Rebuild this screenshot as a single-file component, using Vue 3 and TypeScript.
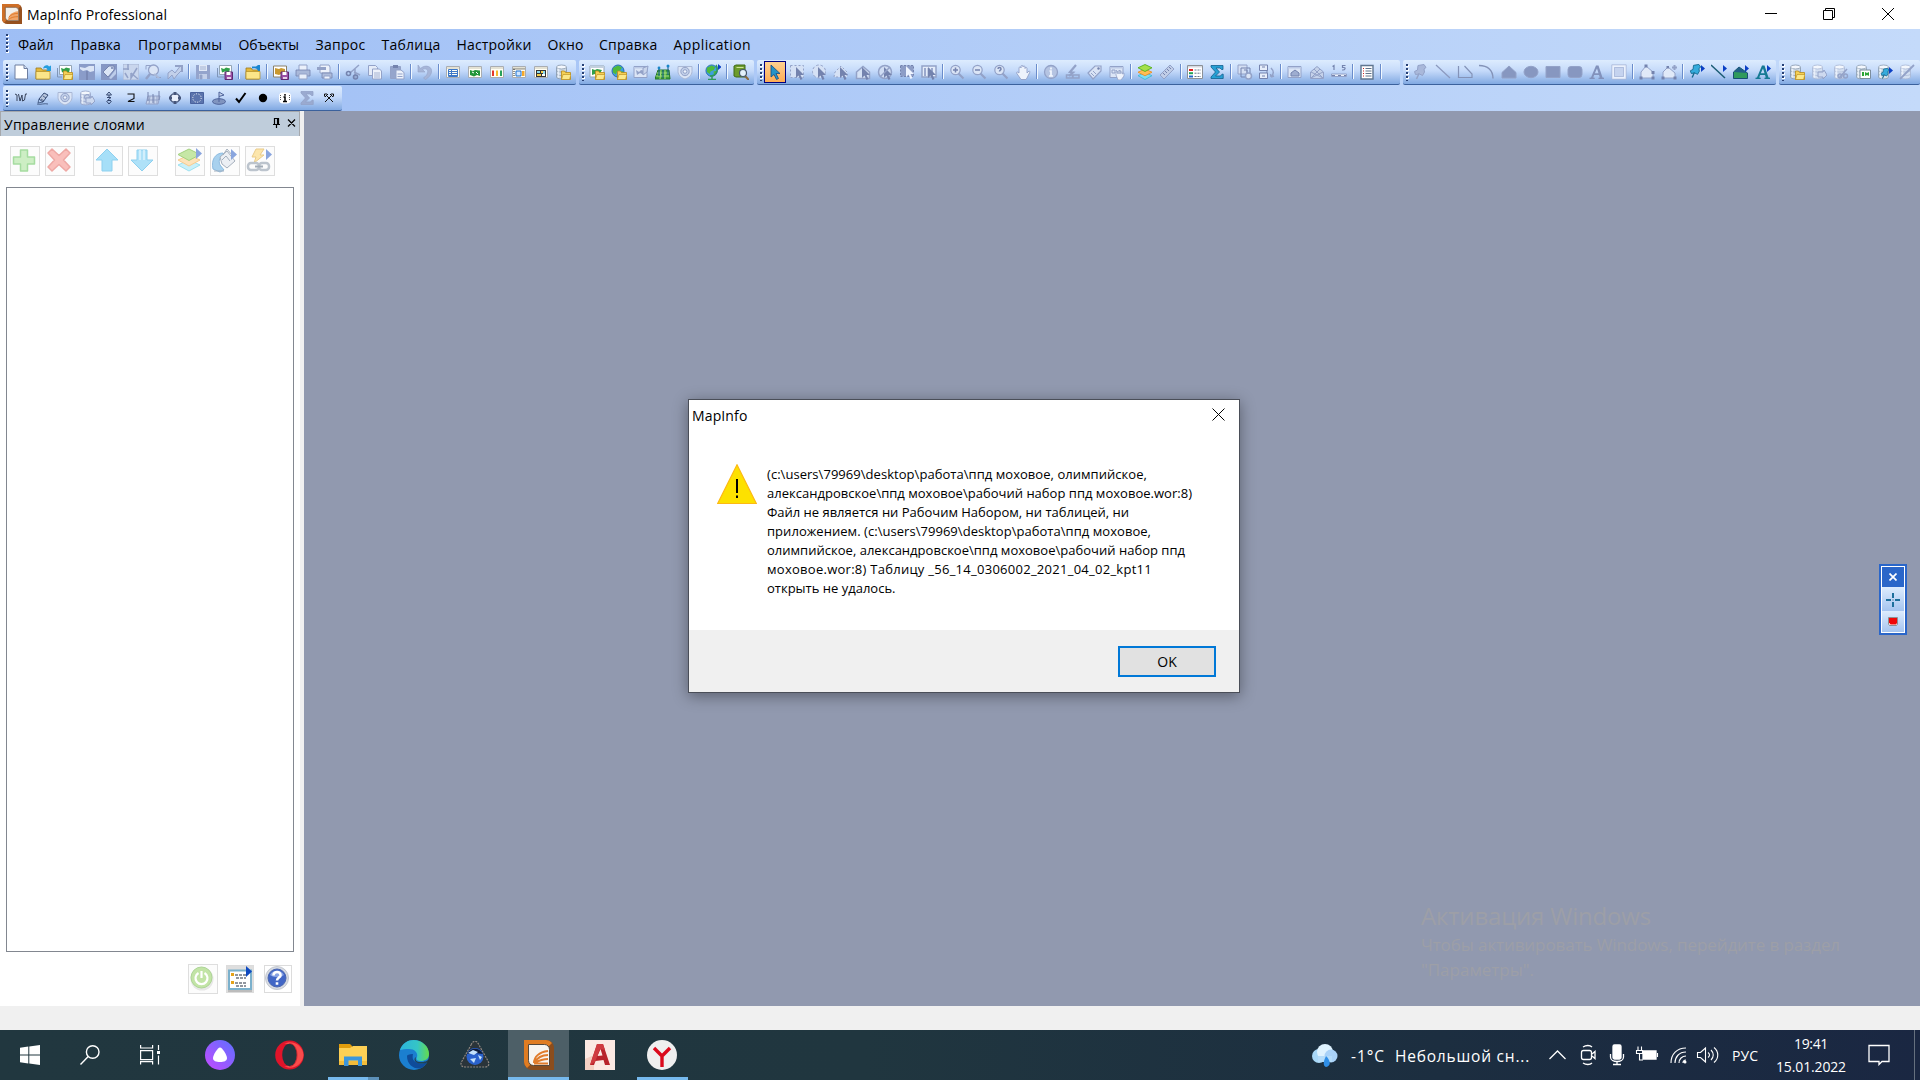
<script setup lang="ts">
interface FitBinding { value: number }
// Tracks a label so that it occupies the width given in pixels.
const vFit = {
  mounted(el: HTMLElement, { value }: FitBinding) {
    const n = (el.textContent || '').length
    const w = el.getBoundingClientRect().width
    if (n > 0 && w > 0) el.style.letterSpacing = (value - w) / n + 'px'
  },
}

const G = '#93a2c8'
const D = '#7483ae'
const L = '#dbe5f6'
const tri = '<path d="M12 1v7l4-3.500z" fill="#0a3fc4"/>'
const folder = '<path d="M6.500 7h3l1 1.500h5v7h-9z" fill="#f5d055" stroke="#b88a1a" stroke-width=".8"/><path d="M8 10.500h8l-1.500 5h-8z" fill="#fbe88a" stroke="#b88a1a" stroke-width=".6"/>'
const bigFolder = '<path d="M1 4h5l1.500 2H14v9H1z" fill="#e4b93c" stroke="#9c7a1c" stroke-width=".8"/><path d="M1 7.500h14v7.500H1z" fill="#fbe589" stroke="#b08a24" stroke-width=".7"/>'
const disk = '<path d="M8 8h7.500v7.500H8z" fill="#9b4fa5" stroke="#5c2a70"/><path d="M9.500 8h4v3h-4z" fill="#fff"/><path d="M10 13h4v2h-4z" fill="#e5cfe8"/>'
const smallMap = '<path d="M2.500 1.500h12v9h-12z" fill="#fff" stroke="#93a5b5"/><path d="M4 4l3 1 2-1.500 4 1-1 4-4-1-3 1z" fill="#2fa04a"/>'
const gFrame = `<path d="M1 2.500h13v11H1z" fill="${L}" stroke="${G}"/><path d="M1 3h13v1.500H1z" fill="#bccae6"/>`
const win = '<path d="M1.500 2.500h13v11h-13z" fill="#fffef4" stroke="#a9adb2"/><path d="M2 3h12v2H2z" fill="#e4e2d4"/>'
const arrow = (c: string, x = 0, y = 0) => `<path transform="translate(${x} ${y})" d="M5 2v11l2.500-2.500L9.500 15l2-1-2-4h3.500z" fill="${c}"/>`
const gArrow = arrow(D, 2, 1)
const cyl = (a: string, b: string) => `<path d="M1.500 3v10c0 2.500 10 2.500 10 0V3" fill="${a}" stroke="${b}" stroke-width=".8"/><ellipse cx="6.500" cy="3" rx="5" ry="2" fill="#f3f7fd" stroke="${b}" stroke-width=".8"/><path d="M1.500 6.500c0 2 10 2 10 0M1.500 10c0 2 10 2 10 0" fill="none" stroke="${b}" stroke-width=".7"/><path d="M3.500 4.500v9" stroke="#f4f8ff" stroke-width="1.500" opacity=".7"/>`
const lens = (t: string) => `<path d="M9.500 9.500l5 5" stroke="${G}" stroke-width="2.200"/><circle cx="6.500" cy="6" r="4.700" fill="${L}" stroke="${G}" stroke-width="1.200"/><path d="${t}" stroke="${D}" stroke-width="1.500" fill="none"/>`
const house = 'M1.500 14.500V8l6.500-5.500L14.500 8v6.500z'
const pin = (a: string, b: string) => `<path d="M5 1.500l6-1 2 3-2 1.500.500 3-2 3.500-3-1.500-4 .500-1-3 3-1.500z" fill="${a}" stroke="${b}"/><path d="M6 9.500L3.500 15" stroke="${b}" stroke-width="1.500"/>`
const layers = '<path d="M8 8.500l7 3.200-7 3.800-7-3.800z" fill="#7fdcf2" stroke="#3bb5d6" stroke-width=".8"/><path d="M8 5l7 3.200-7 3.600-7-3.600z" fill="#ffbd55" stroke="#ea8a1c" stroke-width=".8"/><path d="M8 .500l7 3.300-7 3.700-7-3.700z" fill="#a4e04a" stroke="#4ea912" stroke-width=".8"/>'
const globe = '<circle cx="7" cy="7" r="6" fill="#3e9fe0" stroke="#2a6cae"/><path d="M2 4l5-2.500 4 2-2 3-3 1-1 3-3-2zM9 8l3-1-.500 3-2 2z" fill="#4fba3c"/>'
const badge = `<path d="M1 2.500h14v5c0 4-4 6.500-7 7.500-3-1-7-3.500-7-7.500z" fill="${L}" stroke="#aab8d6"/><circle cx="8" cy="7.500" r="4.200" fill="#c0cee8" stroke="${G}"/><circle cx="8" cy="7.500" r="1.800" fill="#eef4fd" stroke="${G}"/>`
const sigma = (a: string, b: string) => `<path d="M2 1.500h12v4h-1.500L11 4H7l3.500 4L6.500 12h5l1.500-1.800h1.200v4.300H2V13l4.500-5L2 3z" fill="${a}" stroke="${b}" stroke-width=".8"/>`
const aLetterShape = (a: string) => `<path d="M.500 15v-1.200l1.500-.300L7 1.500h2.500l4 12 1.500.300V15H9.500v-1.200l1.300-.300-.800-2.500H5.200l-1 2.500 1.500.300V15zM5.800 9.300h3.700L8 4.500z" fill="${a}"/>`
const gears = `<path d="M7 8h5l1-2 3 5-4 4v-2H7z" fill="#cdd9ef" stroke="${G}"/>`

const icons: Record<string, string> = {
  new: '<path d="M2 1h9l3.500 3.500V15H2z" fill="#fff" stroke="#6e7fa0"/><path d="M11 1v3.500h3.500" fill="#d6e2f4" stroke="#6e7fa0"/>',
  open: bigFolder + '<path d="M8 4.500c1-4 5-4 6-2l2-1V7h-5l1.500-1.500C12 4 10.500 3.500 8 4.500z" fill="#259ede"/>',
  openwor: smallMap + '<path d="M.500 4v9H5" fill="none" stroke="#7f96b8"/>' + folder,
  g1: `<path d="M0 0h16v16H0z" fill="#8a9cc9"/><path d="M1 3l5 1 4-2h5v5l-4 1-3-2-4 1-3-2z" fill="${L}"/><path d="M8 7v9" stroke="${D}" stroke-width="1.500"/>`,
  g2: `<path d="M0 0h16v16H0z" fill="#8697c4"/><path d="M2 8l6-6h5v4l-6 7z" fill="${L}" stroke="${D}"/><circle cx="11" cy="4" r="1" fill="${D}"/><path d="M8 14l7-9v5l-5 5z" fill="#bccce9"/>`,
  g3: `<path d="M0 0h16v16H0z" fill="#c9d6ed" stroke="#a5b4d3"/><path d="M0 5h6M5 0v6M8 9l7 6M8 9v5l6-10M2 9l3 5" stroke="${G}" fill="none" stroke-width="1.500"/>`,
  g4: `<path d="M5 10l-4 5" stroke="${G}" stroke-width="2.500"/><path d="M1 1.500h5M1 1.500v4M11 13.500h5" stroke="${G}"/><circle cx="8.500" cy="6" r="5" fill="${L}" stroke="${G}" stroke-width="1.300"/><path d="M9 10l5 4" stroke="#aab9d8" stroke-width="2"/>`,
  g5: `<path d="M1 9l4-3 3 3 6-8 1 5-5 5-3 4-2-4-4 4z" fill="#c2d0ea" stroke="${G}"/><path d="M8 2h7v6" fill="none" stroke="${G}" stroke-width="2"/>`,
  save: `<path d="M1 1h14v14H1z" fill="#94a4cc"/><path d="M4 1h8v6H4z" fill="#e1e9f7"/><path d="M4 10h8v5H4z" fill="#c3cfe8"/><path d="M5 11h2v4H5zM5 3h6M5 5h6" stroke="${G}" fill="${G}" stroke-width=".8"/>`,
  savewor: smallMap + '<path d="M.500 4v9H7" fill="none" stroke="#7f96b8"/>' + disk,
  close: bigFolder + '<path d="M7 2.500h4l2-1.500h2v6h-2l-1-2c-1-1-3-1-5-.500z" fill="#1a86d0"/>',
  saveas: '<path d="M.500 2h13v11H.500z" fill="#fff" stroke="#8a8068"/><path d="M2 4l4 1 2-1 4 1v3L6 11l-4-1z" fill="#c9982f"/>' + disk,
  print: `<path d="M4 1h8v6H4z" fill="#eaf0fb" stroke="${G}"/><path d="M1 6h14v6H1z" fill="#a9b8d9" stroke="${D}" stroke-width=".8"/><path d="M4 10h8v5H4z" fill="#e8eefa" stroke="${G}"/>`,
  printpdf: `<path d="M3 1h9l1 2v6H3z" fill="#edf2fb" stroke="${G}"/><path d="M0 3h9v3H0z" fill="${G}"/><path d="M5 9h10v5H5z" fill="#afbddb" stroke="${D}" stroke-width=".8"/><path d="M7 12h6v3H7z" fill="#eef3fc" stroke="${G}"/>`,
  cut: `<path d="M14 1L5 9M9 8l6 3M10 5v9" stroke="${G}" stroke-width="1.500"/><circle cx="3.500" cy="9.500" r="2" fill="none" stroke="${D}" stroke-width="1.600"/><circle cx="10.500" cy="13" r="2" fill="none" stroke="${D}" stroke-width="1.600"/>`,
  copy: `<path d="M1.500 1.500h7l2 2v8h-9z" fill="#e5ecf8" stroke="${G}"/><path d="M5.500 5h7l2 2v8h-9z" fill="#edf2fb" stroke="${G}"/><path d="M7 9h6M7 11h6M7 13h6" stroke="${G}" stroke-width=".8"/>`,
  paste: `<path d="M1.500 2.500h10v12h-10z" fill="#95a5cc" stroke="${G}"/><path d="M4 1h5v3H4z" fill="${D}"/><path d="M7 6h5l3 2.500V15H7z" fill="#edf2fb" stroke="${G}"/><path d="M8.500 10h5M8.500 12.500h5" stroke="${G}"/>`,
  undo: `<path d="M1 1v7h7L5.500 5.500c4-2 6 1 5 3.500-.500 2-2 3.500-4 5l2 1.500c7-4 8-11 3-13-3-1-6 0-8 2z" fill="#a6b5d8" stroke="${G}" stroke-width=".6"/>`,
  browse: win + '<path d="M4 7.500h8M4 9.500h8M4 11.500h8M6.500 6v6" stroke="#3d78c8"/><path d="M3.500 5.500h9v7h-9z" fill="none" stroke="#3d78c8"/>',
  map: win + '<path d="M3 6l3 1 2-1 5 .500V12l-3-1-3 1.500L3 11z" fill="#23963a"/><path d="M5 8l2 1M9 8l2 2" stroke="#fff"/>',
  graph: win + '<path d="M3 6.500h2v5.500H3z" fill="#e4362b"/><path d="M7 6.500h2v5.500H7z" fill="#f5b92b"/><path d="M11 6.500h2v5.500h-2z" fill="#27a05a"/>',
  layout: win + '<path d="M2.500 5h11" stroke="#222" stroke-dasharray="1 1"/><path d="M3 5v8" stroke="#222" stroke-dasharray="1 1"/><path d="M5 7h5v5H5z" fill="#cfe6ff" stroke="#1a6fd0"/><path d="M11 7h2.500v5H11z" fill="#f6a82c"/>',
  redistrict: win + '<path d="M3 6h10v7H3z" fill="#333"/><path d="M4 7h3v2H4zM10 7h2v3h-2z" fill="#8fdcf0"/><path d="M8 7h2v2H8zM4 10h4v2H4z" fill="#f6d04a"/><path d="M9 10h3v2H9z" fill="#fff"/>',
  dbopen: cyl('#cfdbe8', '#8496ab') + folder,
  mapopen: '<path d="M1 2h14v11H1z" fill="#fff" stroke="#93a5b5"/><path d="M1 2h14v2H1z" fill="#c3d0de"/><path d="M3 5l3 1 2-1 5 1-3 5-4-1-3 1z" fill="#2fa04a"/>' + folder,
  globeopen: globe + folder,
  g6: gFrame + `<path d="M3 6l3 2 2-2 4 1-1 4-4-2-3 2z" fill="${G}"/><path d="M10 4l5-2-1 6-4 3z" fill="#c8d4eb" stroke="${G}"/>`,
  geo: '<path d="M3 6h11l1 9H0z" fill="#3fa13a" stroke="#23742a"/><path d="M2 9h12M1 12h13M6 6l-1 9M10 6v9" stroke="#a6dc7c"/><path d="M4 3v9M13 2v9M8 6v8" stroke="#125b8e"/><circle cx="13" cy="2" r="1.500" fill="#1a86c8"/><circle cx="4" cy="4" r="1.400" fill="#1a86c8"/>',
  badge,
  globe2: '<g transform="scale(.95)">' + globe + '</g><path d="M11 1c3 5 0 11-6 11M7 12v3M3 15.500h8" stroke="#2f9a5c" stroke-width="1.500" fill="none"/>' + '<path d="M13 0v6l3.500-3z" fill="#0a3fc4"/>',
  book: '<path d="M1 2l2-1h9v12H3l-2-1z" fill="#6d9c2c" stroke="#3f6a18"/><path d="M3.500 3.500h7" stroke="#cfe39a"/><path d="M12 12l4 4" stroke="#8a6a3c" stroke-width="2.200"/><circle cx="10" cy="9" r="3.500" fill="#e3f1fa" stroke="#44566a" stroke-width="1.200"/>',
  select: '<path d="M4 1v12l3-2.500 2.500 5 2-1-2.500-5h4z" fill="#2493c9" stroke="#174a80" stroke-width=".8"/>',
  marquee: `<path d="M1.500 1.500h13v12h-13z" fill="#d5e1f5" stroke="${G}" stroke-dasharray="2 2"/>` + gArrow,
  radius: `<circle cx="8" cy="7.500" r="6.500" fill="#d5e1f5" stroke="${G}" stroke-dasharray="2.500 2"/>` + gArrow,
  polysel: `<path d="M1 13l1-5 6-6 6 6v5z" fill="#d5e1f5" stroke="${G}" stroke-dasharray="2 2"/>` + gArrow,
  housesel: `<path d="${house}" fill="#d5e1f5" stroke="${G}" stroke-width="1.500"/>` + gArrow,
  unsel: `<circle cx="8" cy="8" r="6.500" fill="#cfdcf3" stroke="${G}" stroke-width="1.500"/>` + gArrow + `<path d="M3 13L13 3" stroke="${G}" stroke-width="1.500"/>`,
  invsel: `<path d="M1.500 1.500h13v11h-13z" fill="#8d9dc6" stroke="${D}" stroke-dasharray="2 1.500"/>` + arrow('#eef4ff', 2, 0),
  graphsel: `<path d="M1 2h14v11H1z" fill="#e4ecfa" stroke="${G}" stroke-width="1.500"/><path d="M4 4v8M7.500 4v8M11 4v8" stroke="${G}" stroke-width="1.800"/>` + gArrow,
  zoomin: lens('M4 6h5M6.500 3.500v5'),
  zoomout: lens('M4 6h5'),
  zoomq: lens('M5 5c0-2 3-2 3 0 0 1.200-1.500 1-1.500 2.500'),
  hand: `<path d="M4 9V4c0-1.500 2-1.500 2 0V2.500c0-1.500 2-1.500 2 0V3c0-1.500 2-1.500 2 0v1.500c0-1.500 2-1.500 2 0V9l2-2c1 0 1 1 .500 2L12 14l-1 1.500H6L1.500 9c0-1 1-1.500 2.500 0z" fill="#eef3fc" stroke="${G}" stroke-width=".9"/>`,
  info: `<circle cx="8" cy="8" r="6.500" fill="#b5c4e2" stroke="${G}" stroke-width="1.300"/><path d="M8 3.500v2M6.500 7H8v5M6 12h4" stroke="#f4f8ff" stroke-width="1.700" fill="none"/>`,
  hotlink: `<path d="M11 1L5 8l3 .500L4 12" fill="none" stroke="${G}" stroke-width="2.200"/><path d="M1.500 11h6v3h-6zM8 11h6v3H8z" fill="none" stroke="${G}" stroke-width="1.500"/>`,
  label: `<path d="M1 9l7-7h6v5l-8 8z" fill="#d9e3f5" stroke="${G}" stroke-width="1.200"/><circle cx="11.500" cy="4.500" r="1.200" fill="${D}"/><path d="M4 9l3 3M6 7l3 3" stroke="${G}"/>`,
  dragmap: gFrame + `<path d="M3 6h3v3H3zM7 6l2 3 2-3v4" fill="none" stroke="${G}"/><path d="M7 11V8h2v2-3h2v3-2h2v2l2-1v3l-3 4H9z" fill="#eef3fc" stroke="${G}" stroke-width=".8"/>`,
  layers,
  ruler: `<path d="M1 11L11 1l4 4L5 15z" fill="#c0cde7" stroke="${G}"/><path d="M4 9l2 2M6 7l2 2M8 5l2 2M10 3l2 2" stroke="${D}"/>`,
  legend: '<path d="M.500 1.500h15v13H.500z" fill="#fff" stroke="#8b9096"/><path d="M1 2h14v1.500H1z" fill="#d6dbe2"/><path d="M2 5h4v2H2z" fill="#e21d1d"/><path d="M2 8.200h4v2H2z" fill="#24a054"/><path d="M2 11.500h4v2H2z" fill="#2264c8"/><path d="M7.500 6H14M7.500 9.200H14M7.500 12.500H14" stroke="#66778c" stroke-dasharray="2 1"/>',
  sigma: sigma('#27a0d4', '#12608e'),
  gsigma: sigma('#9aaad0', G),
  target1: `<path d="M1 1h9v9H1z" fill="#d4dff3" stroke="${G}"/><path d="M4 4h9v9H4z" fill="none" stroke="${D}"/><path d="M7 6h3v3" fill="none" stroke="${D}"/><circle cx="11.500" cy="12" r="3" fill="${L}" stroke="${G}" stroke-width="1.500"/>`,
  target2: `<path d="M.500 1h8v5.500h-8zM.500 9h8v5.500h-8zM3 3h3M3 12h3M8 6v3" fill="#e7eefa" stroke="${D}"/><path d="M12 4c3 3 3 6 0 9M12 13l3-1M12 13l-.500-3" fill="none" stroke="${G}" stroke-width="1.500"/>`,
  clip1: gFrame + `<path d="M4 12V9l4-3 4 3v3z" fill="#9eadd0" stroke="${D}"/>`,
  clip2: `<path d="${house}" fill="#c5d2ea" stroke="${G}"/><path d="M2 8l12 6M2 14l12-6M5 5l9 9M11 5l-9 9" stroke="${G}"/>`,
  scale: `<path d="M1.500 2.500L3 1.500V6M14.500 1.500h-3v2h1.500c2 0 1 2.500-1 2.500h-1" fill="none" stroke="${D}" stroke-width="1.200"/><path d="M.500 10h15v2.500H.500z" fill="#edf2fb" stroke="${G}"/><path d="M1 11.500h14" stroke="${D}" stroke-dasharray="3 3"/>`,
  list: '<path d="M2 1.500h12v13.500H2z" fill="#fff" stroke="#5f7690" stroke-width="1.400"/><path d="M4 4.500h1M4 7h1M4 9.500h1M4 12h1" stroke="#c22"/><path d="M6.500 4.500h6M6.500 7h6M6.500 9.500h6M6.500 12h6" stroke="#60758c"/>',
  gpin: pin('#a9b8da', G),
  line: '<path d="M1 1l14 13" stroke="#8b99be" stroke-width="1.200"/>',
  polyline: '<path d="M1.500 2v11.500H15V10L7.500 2" fill="none" stroke="#8493b8" stroke-width="1.200"/>',
  arc: '<path d="M0 1.500c9 0 14 5 14 13" fill="none" stroke="#8493b8" stroke-width="1.400"/>',
  polygon: `<path d="M1 14V8.500L8 2l7 6.500V14z" fill="#8797c0" stroke="${G}"/>`,
  ellipse: `<ellipse cx="8" cy="8" rx="7" ry="5.700" fill="#8797c0" stroke="${G}"/>`,
  rect: `<path d="M1 2.500h14v11H1z" fill="#8797c0" stroke="${G}"/>`,
  rrect: `<rect x="1" y="2.500" width="14" height="11" rx="3" fill="#8797c0" stroke="${G}"/>`,
  gtext: aLetterShape('#8292bc'),
  frame: `<path d="M2 2h12v12H2z" fill="#c5d3ef" stroke="#eaf1fd" stroke-width="2"/><path d="M.800.800h14.400v14.400H.800zM3.500 3.500h9v9h-9z" fill="none" stroke="#aab8d8" stroke-width=".8"/>`,
  reshape: `<path d="M2 14V8l5-6 7 6v6z" fill="#e0e9f8" stroke="${G}"/><path d="M5.500.500h3v3h-3zM.500 12.500h3v3h-3zM12.500 12.500h3v3h-3zM12.500 7h3v3h-3z" fill="${D}"/>`,
  addnode: `<path d="M2 14V8l5-5 7 6v5z" fill="#e0e9f8" stroke="${G}"/><path d="M.500 12.500h3v3h-3zM12.500 12.500h3v3h-3zM5.500 2h2.500v2.500H5.500z" fill="${D}"/><path d="M11 3.500h5M13.500 1v5" stroke="${G}" stroke-width="2"/>`,
  pinst: '<g transform="scale(.9)">' + pin('#35abdc', '#13698e') + '</g>' + tri,
  linest: '<path d="M0 1l14 13" stroke="#1b5c74" stroke-width="1.500"/>' + tri,
  regst: '<path d="M.500 14.500V8L6 3l8.500 6v5.500z" fill="#2f9a5c" stroke="#174f73"/><path d="M1 8l5-5 8 6z" fill="#225f88"/>' + tri,
  textst: aLetterShape('#167a94') + tri,
  dbrefresh: cyl('#d3dff1', '#a7b6d4') + gears,
  dbcut: cyl('#d3dff1', '#a7b6d4') + `<path d="M6 14l8-9" stroke="${G}" stroke-width="1.500"/><circle cx="7" cy="12" r="2" fill="none" stroke="${G}" stroke-width="1.400"/><circle cx="12.500" cy="12" r="2" fill="none" stroke="${G}" stroke-width="1.400"/>`,
  dbmap: cyl('#d5e0e8', '#8a9db3') + '<path d="M5 6h10.500v8.500H5z" fill="#fff" stroke="#7d8e9e"/><path d="M7 8h2v4H7zM10 8l2 1 2-1v4l-2-1-2 1z" fill="#2ca436"/>',
  dbpin: cyl('#d5e0e8', '#8a9db3') + '<g transform="translate(3 4) scale(.7)">' + pin('#35abdc', '#13698e') + '</g>' + '<path d="M12 3v7l4-3.500z" fill="#0a3fc4"/>',
  dbno: cyl('#d3dff1', '#a7b6d4') + `<path d="M1 15L15 1" stroke="${G}" stroke-width="1.800"/>`,
  wave: '<path d="M2 4l2 1v6M5.500 4L7 11l2-6 .500 6 2-1 1-6h1.500" fill="none" stroke="#39445c"/>',
  pencil: '<path d="M4 9l5-6 4 2-5 7z" fill="#b8c6de" stroke="#354b75"/><path d="M4 9l-1 4 5-1M2 14c4 1 7-1 11 0M6 9l3 2M8 6l3 2" fill="none" stroke="#354b75" stroke-width=".8"/>',
  gearsdb: cyl('#c7d3ea', G) + `<circle cx="8" cy="7" r="2.500" fill="none" stroke="${G}"/>` + gears,
  updown: '<path d="M5.500 5L8 2l2.500 3zM8 5v2M5.500 11L8 14l2.500-3" fill="none" stroke="#33456d"/><path d="M6 7.500h4L6.500 10.500H10" fill="none" stroke="#33456d"/>',
  two: '<path d="M4.500 4H11v4.500L5 11.500h6.500" fill="none" stroke="#111" stroke-width="1.100"/>',
  lattice: `<path d="M3 6l-2 8h12l2-8zM2 10h12M5 6l-1 8M9 6v8M12 6v8" fill="#cad6ed" stroke="${G}"/><path d="M3 2v9M8 4v9M14 1v9" stroke="${D}"/>`,
  octagon: '<path d="M5.500 4h5l2 2v4l-2 2h-5l-2-2V6z" fill="#e9effc" stroke="#45557a" stroke-width="1.200"/><path d="M6.500 2h3v3h-3zM6.500 11h3v3h-3zM2 6.500h3v3H2zM11 6.500h3v3h-3z" fill="#45557a"/>',
  eu: '<path d="M1.500 2.500h13v11h-13z" fill="#5b74ad" stroke="#4a629e"/><circle cx="8" cy="8" r="4.200" fill="none" stroke="#fff" stroke-dasharray="1 1.600"/>',
  flag: '<ellipse cx="8" cy="11.500" rx="6.500" ry="2.800" fill="#8094bf" stroke="#4e639a"/><path d="M8 12V2l5 3-5 1.500" fill="#c4d2ec" stroke="#4e639a"/>',
  check: '<path d="M3 8.500l3 3.500 6.500-9" fill="none" stroke="#000" stroke-width="2"/>',
  dot: '<circle cx="8" cy="8" r="4.200" fill="#000"/>',
  info2: '<rect x="2" y="2.500" width="12" height="11" rx="4" fill="#fff"/><path d="M8 4v1.800M6.500 7H8v4.500M6 11.500h4" stroke="#000" stroke-width="1.500" fill="none"/><path d="M3.500 5v6M12.500 5v6" stroke="#555" stroke-dasharray="1 1"/>',
  tools: '<path d="M4 12l7-7M12 12L5 5M3.500 6.500V4H6M10 4h2.500v2.500M9 4l3 3M4 7l3-3" fill="none" stroke="#111"/>',
}

const bars: string[] = [
  'new open openwor g1 g2 g3 g4 g5 | save savewor | close | saveas print printpdf | cut copy paste | undo | browse map graph layout redistrict dbopen',
  'mapopen globeopen g6 geo badge | globe2 | book',
  'select marquee radius polysel housesel unsel invsel graphsel | zoomin zoomout zoomq hand | info hotlink label dragmap | layers ruler | legend sigma | target1 target2 | clip1 clip2 scale | list |',
  'gpin line polyline arc polygon ellipse rect rrect gtext frame | reshape addnode | pinst linest regst textst',
  'dbopen dbrefresh dbcut dbmap dbpin dbno',
]
const barWidths = [573, 175, 643, 373, 141]
const toolRow = bars.map((b, i) => ({ items: b.split(' '), width: barWidths[i] }))
const secondRow = 'wave pencil badge gearsdb updown two lattice octagon eu flag check dot info2 gsigma tools'.split(' ')

const menu = [
  { t: 'Файл', w: 35.5, g: 17 }, { t: 'Правка', w: 50.5, g: 17 }, { t: 'Программы', w: 84.5, g: 16 },
  { t: 'Объекты', w: 60.5, g: 16.5 }, { t: 'Запрос', w: 50, g: 16 }, { t: 'Таблица', w: 59, g: 16 },
  { t: 'Настройки', w: 75, g: 16 }, { t: 'Окно', w: 36, g: 15.5 }, { t: 'Справка', w: 58.5, g: 16 }, { t: 'Application', w: 77.5, g: 0 },
]

const message = [
  { t: '(c:\\users\\79969\\desktop\\работа\\ппд моховое, олимпийское,', w: 380 },
  { t: 'александровское\\ппд моховое\\рабочий набор ппд моховое.wor:8)', w: 425 },
  { t: 'Файл не является ни Рабочим Набором, ни таблицей, ни', w: 362 },
  { t: 'приложением. (c:\\users\\79969\\desktop\\работа\\ппд моховое,', w: 384 },
  { t: 'олимпийское, александровское\\ппд моховое\\рабочий набор ппд', w: 418 },
  { t: 'моховое.wor:8) Таблицу _56_14_0306002_2021_04_02_kpt11', w: 385 },
  { t: 'открыть не удалось.', w: 128.5 },
]
</script>

<template>
  <div class="screen">
    <header class="titlebar">
      <svg class="logo" width="20" height="20" viewBox="0 0 30 30">
        <path d="M0 0h22a8 8 0 0 1 8 8v22H8a8 8 0 0 1-8-8z" fill="#97511f" />
        <path d="M0 0h22a8 8 0 0 1 6 3L3 28a8 8 0 0 1-3-6z" fill="#cf6f27" />
        <path d="M5 5h15a5 5 0 0 1 5 5v15H10a5 5 0 0 1-5-5z" fill="#f3efea" stroke="#6a4a30" />
        <path d="M9 24c1-8 6-12 15-13v13z" fill="#f0a468" />
        <path d="M10 20c3-4 8-6 14-6M10 23c4-3 8-4 14-4" fill="none" stroke="#e07b2c" stroke-width="1.500" />
      </svg>
      <span v-fit="140" class="apptitle">MapInfo Professional</span>
      <svg class="winbtns" width="136" height="20" viewBox="0 0 136 20" fill="none" stroke="#000">
        <path d="M0 8.500h12M58.500 5.500h9v9h-9zM60.500 5.500v-2h9v9h-2M117 3l12 12M129 3l-12 12" />
      </svg>
    </header>

    <section class="dock">
      <nav class="menubar">
        <i class="grip"></i>
        <span v-for="m in menu" :key="m.t" v-fit="m.w" class="menuitem" :style="{ marginRight: m.g + 'px' }">{{ m.t }}</span>
      </nav>
      <div class="toolrow">
        <div v-for="(bar, i) in toolRow" :key="i" class="toolbar" :style="{ width: bar.width + 'px' }">
          <i class="grip"></i>
          <template v-for="(ic, k) in bar.items" :key="k">
            <i v-if="ic === '|'" class="sep"></i>
            <span v-else class="tool" :class="{ on: ic === 'select' }"><svg width="16" height="16" viewBox="0 0 16 16" v-html="icons[ic]"></svg></span>
          </template>
        </div>
      </div>
      <div class="toolrow">
        <div class="toolbar short">
          <i class="grip"></i>
          <span v-for="ic in secondRow" :key="ic" class="tool"><svg width="16" height="16" viewBox="0 0 16 16" v-html="icons[ic]"></svg></span>
        </div>
      </div>
    </section>

    <main class="work">
      <aside class="panel">
        <div class="panelhead">
          <span v-fit="141">Управление слоями</span>
          <svg width="24" height="12" viewBox="0 0 24 12" fill="none" stroke="#000">
            <path d="M1 7.500h7M2.500 7V1.500h4V7M5.500 1.500V7M4.500 8v3M16 2.500l7 7M23 2.500l-7 7" stroke-width="1.200" />
          </svg>
        </div>
        <div class="paneltools">
          <span class="pbtn"><svg viewBox="0 0 28 28"><path d="M9.500 3h7v7h7v7h-7v7h-7v-7h-7v-7h7z" fill="#cdeec4" stroke="#a5dca0" stroke-width="1.500" stroke-linejoin="round" /></svg></span>
          <span class="pbtn"><svg viewBox="0 0 28 28"><path d="M6 2l7 6.500L20 2l4 4-6.500 7 6.500 7-4 4-7-6.500L6 24l-4-4 6.500-7L2 6z" fill="#f9bfbb" stroke="#eea8a4" stroke-width="1.500" stroke-linejoin="round" /></svg></span>
          <span class="pbtn gap1"><svg viewBox="0 0 28 28"><path d="M13 2l11 11h-6v11H8V13H2z" fill="#a6dff8" stroke="#8dd0ef" /></svg></span>
          <span class="pbtn"><svg viewBox="0 0 28 28"><path d="M13 24L2 13h6V3h10v10h6z" fill="#aee1f8" stroke="#8dd0ef" /><path d="M11 3v10M15 3v10" stroke="#def4fd" stroke-width="1.500" /></svg></span>
          <span class="pbtn gap2"><svg viewBox="0 0 28 28"><path d="M13 13l11 5-11 6-11-6z" fill="#c9f0f9" stroke="#9ce1f0" /><path d="M13 8l11 5-11 6-11-6z" fill="#fde3ba" stroke="#f7cc90" /><path d="M13 2l11 5.500-11 6-11-6z" fill="#c6e7a6" stroke="#a2d17e" /><path d="M20 1v11l6-5.500z" fill="#89a5de" /></svg></span>
          <span class="pbtn"><svg viewBox="0 0 28 28"><path d="M2 22C0 13 4 6 12 6l2 3c-5 0-7 4-5 9l4 5-4 2z" fill="#a8d1ee" stroke="#8dbbe0" /><path d="M9 10l7-6 8 10-8 7-5-4z" fill="#eceff4" stroke="#a6b0bd" /><path d="M3 24h10M12 8l4-6 5 6M11 13l4-4 4 5" stroke="#a3afbd" fill="none" /><path d="M20 2v11l6-5.500z" fill="#89a5de" /></svg></span>
          <span class="pbtn"><svg viewBox="0 0 28 28"><path d="M10 2h8l-4 6h4L8 16l2-6H6z" fill="#fce6ac" stroke="#e9cb8a" /><rect x="2" y="16" width="11" height="7" rx="3" fill="none" stroke="#bcc4cd" stroke-width="2.500" /><rect x="13" y="16" width="10" height="7" rx="3" fill="none" stroke="#bcc4cd" stroke-width="2.500" /><path d="M9 19.500h8" stroke="#a2acb7" stroke-width="2" /><path d="M20 2v11l6-5.500z" fill="#89a5de" /></svg></span>
        </div>
        <div class="listbox"></div>
        <div class="panelfoot">
          <span class="pbtn"><svg viewBox="0 0 28 28"><circle cx="13" cy="14" r="11.500" fill="#a9a9a9" opacity=".25" /><circle cx="12.500" cy="12.500" r="10.500" fill="#c2e4a6" stroke="#add596" /><path d="M9.500 8a6 6 0 1 0 6 0M12.500 6v7" fill="none" stroke="#fff" stroke-width="2.200" /></svg></span>
          <span class="fbtn grey"><svg viewBox="0 0 26 26"><path d="M2 4.500h22V23H2z" fill="#fff" stroke="#7ab0cc" stroke-width="2" /><path d="M1 25h24" stroke="#9a9a9a" /><path d="M4 7h3v3H4zM4 15h3v3H4z" fill="#e5a21a" /><path d="M8 9h12M9 12h10M8 17h12M9 20h10" stroke="#6e7480" stroke-width="1.500" stroke-dasharray="3 1" /><path d="M19 0v11l6-5.500z" fill="#0f49c0" /></svg></span>
          <span class="fbtn"><svg viewBox="0 0 26 26"><circle cx="12" cy="12" r="11.500" fill="#d7dbe2" stroke="#c4c8d0" /><circle cx="12" cy="12" r="9" fill="#4166c6" stroke="#4a66b0" /><path d="M5 9a8 8 0 0 1 14 0c-4 3-10 3-14 0z" fill="#88a3e4" /><path d="M8.500 9.500c0-5 7.500-4.500 7 0-.300 2-3.500 2.200-3.500 5" fill="none" stroke="#fff" stroke-width="2.600" /><path d="M10.700 16.200h2.600v2.600h-2.600z" fill="#fff" /></svg></span>
        </div>
      </aside>
      <div class="splitter"></div>
      <div class="mdi"></div>
    </main>

    <div class="statusbar"></div>

    <footer class="taskbar">
      <div class="slot" style="width: 60px"><svg width="20" height="20" viewBox="0 0 20 20"><path d="M0 2.700l8.300-1.100v7.900H0zM9.300 1.500L20 0v9.500H9.300zM0 10.500h8.300v7.900L0 17.300zM9.300 10.500H20V20L9.300 18.500z" fill="#fff" /></svg></div>
      <div class="slot" style="width: 60px"><svg width="20" height="20" viewBox="0 0 20 20" fill="none" stroke="#fff" stroke-width="1.400"><circle cx="12.700" cy="7" r="6.300" /><path d="M8.200 11.500L.500 19.500" /></svg></div>
      <div class="slot" style="width: 60px"><svg width="20" height="20" viewBox="0 0 20 20" fill="none" stroke="#fff" stroke-width="1.200"><path d="M.600 5.700h12v9H.600zM.600 0v3h12V0M.600 19.500v-2.800h12v2.800M18.500 0v5M18.500 10.500v9" /><path d="M17 6h3v3h-3z" fill="#fff" stroke="none" /></svg></div>
      <div class="slot" style="width: 80px">
        <svg width="30" height="30" viewBox="0 0 30 30"><defs><linearGradient id="al" x1="0" y1="1" x2="1" y2="0"><stop offset="0" stop-color="#c54aff" /><stop offset="1" stop-color="#5c70ff" /></linearGradient></defs><circle cx="15" cy="15" r="15" fill="url(#al)" /><path d="M15 7.500c2.500 0 7 8 7 10.500 0 3-3 4-7 4s-7-1-7-4c0-2.500 4.500-10.500 7-10.500z" fill="#fff" /></svg>
      </div>
      <div class="slot" style="width: 59px">
        <svg width="29" height="30" viewBox="0 0 29 30"><ellipse cx="14.500" cy="15" rx="14.300" ry="14.500" fill="#e0142a" /><path d="M9 4c8-5 19 1 19.500 11C28 25 17 31 9 26c12 3 12-25 0-22z" fill="#fa4b4b" /><ellipse cx="14.500" cy="15" rx="7.300" ry="11.300" fill="#21363f" /><path d="M14.500 3.700c10 0 10 22.600 0 22.600" fill="none" stroke="#b01020" stroke-width=".6" /></svg>
      </div>
      <div class="slot open" style="width: 67px">
        <svg width="28" height="24" viewBox="0 0 28 24"><path d="M0 1h11l2 2v3H0z" fill="#e09c0c" /><path d="M0 5h11l3-2h14v19H0z" fill="#fdd055" /><path d="M0 18h28v4H0z" fill="#f3bd3a" /><path d="M5 23V13.500h18V23h-4v-5.500H9.500V23z" fill="#3b96dc" /></svg>
        <i class="under two"></i>
      </div>
      <div class="slot" style="width: 56px">
        <svg width="30" height="30" viewBox="0 0 30 30"><defs><linearGradient id="ed" x1="0" x2="1"><stop offset="0" stop-color="#2cb4dc" /><stop offset=".6" stop-color="#35c5c6" /><stop offset="1" stop-color="#66dc4a" /></linearGradient></defs><circle cx="15" cy="15" r="15" fill="#1b7fd0" /><path d="M1 10C4 1 13-1.500 20 1c7 2.500 10 8 10 13 0 5-4 7-8 7-5 0-5-2-4-4 1-3-1-8-8-8-4 0-7 .500-9 1z" fill="url(#ed)" /><path d="M8 16c0 8 6 13 13 12.500 3-1 6-4 7-6.500-4 2-7 2-11 0-3-1-4-4-3-8-4 0-6 1-6 2z" fill="#0f4c9a" /><path d="M17 17c-1 3 0 5 5 5 3 0 5 0 8-3l-1 3c-4 2-9 2-12 0-2-1-2-4 0-5z" fill="#21363f" opacity=".85" /></svg>
      </div>
      <div class="slot" style="width: 66px">
        <svg width="30" height="28" viewBox="0 0 30 28"><path d="M11 4c2-5 6-5 8 0l9 16c2 4 0 6-3 6H5c-4 0-5-3-3-6z" fill="#2a343a" stroke="#8f8780" stroke-dasharray="2 1" stroke-width="1.200" /><circle cx="15" cy="15.500" r="8.500" fill="#2a62cc" /><path d="M7 13c4-7 12-7 16 0l-8-1z" fill="#0e1c38" /><path d="M8 12l5-3 5 2-4 3zM10 18l6-1-2 5zM18 14l4 2-2 3z" fill="#c4e2fc" /></svg>
      </div>
      <div class="slot active" style="width: 61px">
        <svg width="30" height="30" viewBox="0 0 30 30"><path d="M0 0h22a8 8 0 0 1 8 8v22H8a8 8 0 0 1-8-8z" fill="#8b4d1d" /><path d="M0 0h22a8 8 0 0 1 6 3L3 28a8 8 0 0 1-3-6z" fill="#e07c22" /><path d="M4.500 4.500h16a5 5 0 0 1 5 5v16H9.500a5 5 0 0 1-5-5z" fill="#f7f4f0" stroke="#54483c" /><path d="M10 23c0-6 5-11 14-12M10 23c3-5 8-8 14-8M10 23c4-2 8-4 14-4M10 23.500h14" fill="none" stroke="#e07c2c" stroke-width="2" /></svg>
        <i class="under full"></i>
      </div>
      <div class="slot" style="width: 62px">
        <svg width="30" height="30" viewBox="0 0 30 30"><path d="M0 0h30v30H0z" fill="#fbe9e3" /><path d="M0 19l9-4v15H0z" fill="#f4cfc2" /><path d="M5 25L12 4h6l7 21h-5l-1.500-5-8 1L9 25zM12.500 16l5-.500L15.500 9z" fill="#b8232b" /><path d="M12 4h6l2 6-5-1-5 13-5 3z" fill="#cf3b40" /></svg>
      </div>
      <div class="slot open" style="width: 62px">
        <svg width="30" height="30" viewBox="0 0 30 30"><circle cx="15" cy="15" r="15" fill="#efefef" /><path d="M7 8l8 8 8-8M15 15v12" fill="none" stroke="#db0a1c" stroke-width="3.400" /></svg>
        <i class="under"></i>
      </div>
      <div class="grow"></div>
      <svg class="cloud" width="26" height="24" viewBox="0 0 26 24"><circle cx="7" cy="12" r="7" fill="#a8d8f8" /><circle cx="13" cy="8" r="8" fill="#dff3ff" /><circle cx="19" cy="12" r="6.500" fill="#a9d2f8" /><path d="M6 12h14v6H6z" fill="#b4dcfa" /><path d="M14 12c5 5 5 10 0 11-3-1-3-5 0-11z" fill="#2f8fe8" /></svg>
      <span v-fit="34" class="temp">-1°C</span>
      <span v-fit="135" class="weather">Небольшой сн...</span>
      <svg class="tray" width="170" height="24" viewBox="0 0 170 24" fill="none" stroke="#fff" stroke-width="1.300">
        <path d="M.500 16L8.500 8l8 8" />
        <rect x="32.500" y="7.500" width="10" height="9" rx="2" /><path d="M43 11l3-2.500v7L43 13M34 4c3-2 7-2 9 0M34 20c3 2 7 2 9 0" />
        <rect x="64" y="2" width="8" height="14" rx="1.500" fill="#fff" /><path d="M61.500 11v3c0 6 13 6 13 0v-3M68 18.500V21M64 21.500h8" />
        <path d="M94 8h13v8H94z" fill="#fff" /><path d="M108.500 10v4M89 3.500v4M92.500 3.500v4M87.500 7.500h6v3h-6zM90.500 11v6H94" stroke-width="1.100" />
        <path d="M122 20c0-9 6-15 15-15M126 20c0-6 4-11 11-11M130 20c0-4 3-7 7-7M134 20c0-2 1-3 3-3" stroke-width="1.100" /><circle cx="136" cy="19" r="1.500" fill="#fff" stroke="none" />
        <path d="M148.500 9.500h3l5-4.500v14l-5-4.500h-3zM159 9.500c2 1.500 2 3.500 0 5M162 7c3 3 3 7 0 10M165 4.500c5 4 5 11 0 15" stroke-width="1.100" />
      </svg>
      <span v-fit="26" class="lang">РУС</span>
      <div class="clock"><span v-fit="34">19:41</span><span v-fit="70">15.01.2022</span></div>
      <svg class="notes" width="22" height="22" viewBox="0 0 22 22" fill="none" stroke="#fff" stroke-width="1.300"><path d="M1 1.500h20v16h-7l-3 3v-3H1z" /></svg>
      <div class="peek"></div>
    </footer>

    <div class="watermark">
      <p class="big"><span v-fit="230">Активация Windows</span></p>
      <p><span v-fit="419">Чтобы активировать Windows, перейдите в раздел</span></p>
      <p><span v-fit="113">"Параметры".</span></p>
    </div>

    <div class="floatbar">
      <div class="floathead"><svg width="8" height="8" viewBox="0 0 8 8"><path d="M.500.500l7 7M7.500.500l-7 7" stroke="#fff" stroke-width="1.700" /></svg></div>
      <div class="floatbtn"><svg width="14" height="14" viewBox="0 0 14 14"><path d="M7 0v5M7 9v5M0 7h5M9 7h5" stroke="#1d6f9c" stroke-width="2" /><path d="M6.500 6.500h1v1h-1z" fill="#1d4f7c" /></svg></div>
      <div class="floatbtn"><svg width="12" height="12" viewBox="0 0 12 12"><path d="M1.500 2.500h9V9l-1 1.500h-7L1.500 9z" fill="#fff" stroke="#777" stroke-width=".8" /><path d="M2 3h8v5L9 9.500H3.500L2 7.500z" fill="#f00808" /></svg></div>
    </div>

    <div class="dialog" role="alertdialog">
      <div class="dlghead">
        <span v-fit="55.5">MapInfo</span>
        <svg width="13" height="13" viewBox="0 0 13 13"><path d="M.500.500l12 12M12.500.500l-12 12" stroke="#000" stroke-width="1" /></svg>
      </div>
      <div class="dlgbody">
        <svg width="40" height="40" viewBox="0 0 40 40"><path d="M20 .800L39.300 39.500H.700z" fill="#fde100" stroke="#fdb913" stroke-width="1.200" /><path d="M19 15h2v14h-2zM19 31.500h2v2.500h-2z" fill="#000" /></svg>
        <div class="msg"><div v-for="l in message" :key="l.t"><span v-fit="l.w">{{ l.t }}</span></div></div>
      </div>
      <div class="dlgfoot"><button class="ok"><span v-fit="19.500">OK</span></button></div>
    </div>
  </div>
</template>

<style>
html, body { margin: 0; overflow: hidden; }
</style>

<style scoped>
.screen { position: relative; width: 1920px; height: 1080px; display: flex; flex-direction: column; overflow: hidden; font-family: "Open Sans", "Noto Sans", sans-serif; font-size: 14px; color: #000; background: #f0f0f0; }
.screen * { box-sizing: border-box; }
.screen span { white-space: nowrap; }
svg { display: block; flex: none; }
.titlebar { height: 29px; flex: none; background: #fff; display: flex; align-items: center; padding-left: 2px; }
.logo { margin-top: -1px; }
.apptitle { margin-left: 5px; }
.winbtns { margin-left: auto; margin-right: 19px; }
.dock { height: 82px; flex: none; background: linear-gradient(90deg, #9ebef5, #c4dafa); }
.menubar { height: 31px; display: flex; align-items: center; padding-left: 18px; position: relative; }
.menuitem { display: inline-block; }
.menubar .grip { position: absolute; left: 6px; top: 5px; height: 19px; }
.toolrow { display: flex; gap: 3px; padding-left: 3px; height: 26px; }
.toolbar { display: flex; align-items: center; height: 25px; flex: none; padding: 0 0 1px 7px; position: relative; border-radius: 2px; border-bottom: 1px solid #3b619c; background: linear-gradient(#ddecfe, #c5dafa 45%, #81a9e2); }
.short { width: 339px; }
.grip { position: absolute; left: 3px; top: 4px; width: 3px; height: 17px; background: repeating-linear-gradient(#274176 0 2px, transparent 2px 4px) left / 2px 100% no-repeat, repeating-linear-gradient(transparent 0 1px, #fff 1px 3px, transparent 3px 4px); }
.tool { width: 22px; height: 22px; flex: none; display: flex; align-items: center; justify-content: center; }
.tool.on { border: 1px solid #000080; background: linear-gradient(#ffd190, #feac55); }
.sep { width: 2px; height: 15px; margin: 0 2px; flex: none; border-left: 1px solid #6a8ccb; border-right: 1px solid #f1f9ff; }
.work { flex: 1; display: flex; min-height: 0; }
.panel { width: 300px; background: #fff; display: flex; flex-direction: column; flex: none; }
.panelhead { height: 25px; background: #bfcddb; border: 1px solid #a5a8ac; border-bottom: 0; display: flex; align-items: center; justify-content: space-between; padding: 0 3px 0 3px; }
.panelhead svg { margin-top: -2px; }
.paneltools { display: flex; gap: 5px; padding: 10px 0 0 10px; height: 51px; }
.pbtn { width: 30px; height: 30px; border: 1px solid #dedede; background: #fcfcfc; flex: none; }
.pbtn svg { width: 28px; height: 28px; }
.gap1 { margin-left: 13px; }
.gap2 { margin-left: 12px; }
.listbox { height: 765px; margin: 0 6px; border: 1px solid #828790; background: #fff; }
.panelfoot { display: flex; justify-content: flex-end; padding: 12px 8px 0 0; }
.fbtn { width: 28px; height: 28px; border: 1px solid #dcdcdc; margin-top: 1px; }
.panelfoot .grey { margin: 1px 10px 0 8px; background: #dedede; }
.fbtn svg { width: 26px; height: 26px; }
.splitter { width: 4px; background: #f0f0f0; }
.mdi { flex: 1; background: #9199af; }
.statusbar { height: 24px; flex: none; background: #f0f0f0; }
.taskbar { height: 50px; flex: none; display: flex; align-items: center; color: #fff; background: linear-gradient(90deg, #21373f 0, #20363f 45%, #1c2e40 75%, #1a2742 100%); }
.slot { height: 50px; flex: none; display: flex; align-items: center; justify-content: center; position: relative; }
.slot.active { background: #4d5f67; }
.under { position: absolute; left: 50%; margin-left: -25px; bottom: 0; width: 51px; height: 3px; background: #76b9ed; }
.under.full { left: 0; margin: 0; width: 100%; }
.under.two { background: linear-gradient(90deg, #76b9ed 40px, #5c90b8 40px); }
.grow { flex: 1; }
.cloud { margin-top: 1px; }
.temp, .weather { font-size: 15.5px; padding-top: 2px; }
.temp { margin-left: 13px; }
.weather { margin-left: 10px; }
.tray { margin-left: 19px; }
.lang { font-size: 14px; margin-left: 13px; }
.clock { width: 70px; margin-left: 18px; height: 46px; display: flex; flex-direction: column; align-items: center; line-height: 23px; }
.notes { margin: 0 24px 0 22px; }
.peek { width: 6px; height: 50px; border-left: 1px solid #65707e; }
.watermark { position: absolute; left: 1421px; top: 899px; color: #9d9fa7; font-size: 17px; }
.watermark p { margin: 0; height: 25px; line-height: 25px; }
.watermark .big { height: 33px; line-height: 33px; font-size: 24px; }
.floatbar { position: absolute; left: 1879px; top: 564px; width: 28px; height: 71px; border: 2px solid #2a66c9; background: #fff; padding: 1px; display: flex; flex-direction: column; }
.floathead { height: 20px; padding-bottom: 1px; background: #2a66c9; display: flex; align-items: center; justify-content: center; }
.floatbtn { flex: 1; display: flex; align-items: center; justify-content: center; background: linear-gradient(#ddecfe, #a5c4ef); }
.floatbtn:nth-child(2) { padding-top: 2px; }
.dialog { position: absolute; left: 688px; top: 399px; width: 552px; height: 294px; border: 1px solid #4a4e58; background: #fff; box-shadow: 0 3px 14px rgba(0, 0, 0, .38); display: flex; flex-direction: column; }
.dlghead { height: 32px; display: flex; align-items: center; justify-content: space-between; padding: 0 14px 1px 3px; }
.dlghead svg { margin-top: -2px; }
.dlgbody { flex: 1; display: flex; padding: 32px 0 0 28px; }
.msg { margin: 1px 0 0 10px; font-size: 13px; line-height: 19px; }
.msg div { height: 19px; }
.dlgfoot { height: 62px; background: #f0f0f0; display: flex; justify-content: flex-end; padding: 16px 23px 0 0; }
.ok { width: 98px; height: 31px; padding: 0; border: 2px solid #0078d7; background: #e1e1e1; font: inherit; color: #000; }
</style>
